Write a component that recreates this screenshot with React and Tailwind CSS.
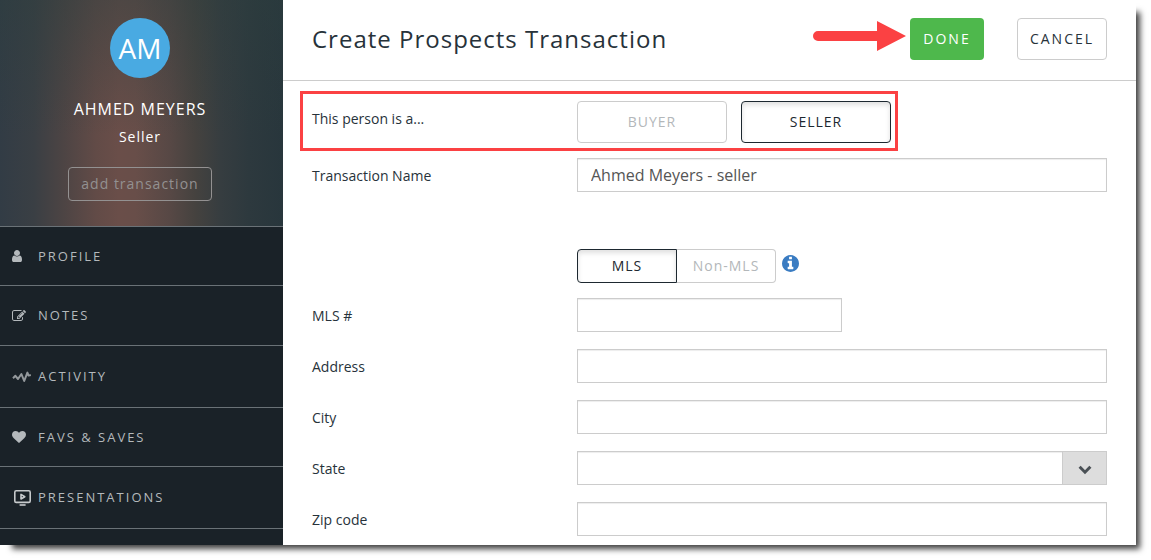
import React, { useState } from 'react';
import clsx from 'clsx';

const UserIcon = () => (
  <svg viewBox="0 128 1280 1536" className="h-3 w-[10px]" fill="currentColor" aria-hidden>
    <path d="M1280 1399q0 109-62.5 187t-150.5 78h-854q-88 0-150.5-78t-62.5-187q0-85 8.5-160.5t31.5-152 58.5-131 94-89 134.5-34.5q131 128 313 128t313-128q76 0 134.5 34.5t94 89 58.5 131 31.5 152 8.5 160.5zm-256-887q0 159-112.5 271.5t-271.5 112.5-271.5-112.5-112.5-271.5 112.5-271.5 271.5-112.5 271.5 112.5 112.5 271.5z" />
  </svg>
);

const NotesIcon = () => (
  <svg viewBox="0 0 1792 1792" className="size-[14px]" fill="currentColor" aria-hidden>
    <path d="M888 1184l116-116-152-152-116 116v56h96v96h56zm440-720q-16-16-33 1l-350 350q-17 17-1 33t33-1l350-350q17-17 1-33zm80 594v190q0 119-84.5 203.5t-203.5 84.5h-832q-119 0-203.5-84.5t-84.5-203.5v-832q0-119 84.5-203.5t203.5-84.5h832q63 0 117 25 15 7 18 23 3 17-9 29l-49 49q-14 14-32 8-23-6-45-6h-832q-66 0-113 47t-47 113v832q0 66 47 113t113 47h832q66 0 113-47t47-113v-126q0-13 9-22l64-64q15-15 35-7t20 29zm-96-738l288 288-672 672h-288v-288zm444 132l-92 92-288-288 92-92q28-28 68-28t68 28l152 152q28 28 28 68t-28 68z" />
  </svg>
);

const ActivityIcon = () => (
  <svg viewBox="0 0 20 12" className="h-3 w-5 text-[#94999c]" fill="none" stroke="currentColor" strokeWidth="2" aria-hidden>
    <path d="M1 7.2 3.4 4.8 6 8 9.4 3 12.2 10 15.4 1.6 16.6 4.6 18.8 4" strokeLinejoin="round" />
  </svg>
);

const HeartIcon = () => (
  <svg viewBox="0 0 1792 1792" className="size-[14px]" fill="currentColor" aria-hidden>
    <path d="M896 1664q-26 0-44-18l-624-602q-10-8-27.5-26t-55.5-65.5-68-97.5-53.5-121-23.5-138q0-220 127-344t351-124q62 0 126.5 21.5t120 58 95.5 68.5 76 68q36-36 76-68t95.5-68.5 120-58 126.5-21.5q224 0 351 124t127 344q0 221-229 450l-623 600q-18 18-44 18z" />
  </svg>
);

const PresentationIcon = () => (
  <svg viewBox="0 0 20 20" className="size-5 text-[#c6cacc]" fill="none" stroke="currentColor" strokeWidth="1.6" aria-hidden>
    <rect x="2.8" y="2.8" width="15.4" height="11.6" rx="1.4" />
    <path d="M9 6.4v4.6l3.8-2.3z" strokeLinejoin="round" />
    <path d="M7.6 17h6" />
  </svg>
);

const InfoIcon = () => (
  <svg viewBox="128 128 1536 1536" className="size-[17px]" fill="currentColor" aria-hidden>
    <path d="M1152 1376v-160q0-14-9-23t-23-9h-96v-512q0-14-9-23t-23-9h-320q-14 0-23 9t-9 23v160q0 14 9 23t23 9h96v320h-96q-14 0-23 9t-9 23v160q0 14 9 23t23 9h448q14 0 23-9t9-23zm-128-896v-160q0-14-9-23t-23-9h-192q-14 0-23 9t-9 23v160q0 14 9 23t23 9h192q14 0 23-9t9-23zm640 416q0 209-103 385.5t-279.5 279.5-385.5 103-385.5-103-279.5-279.5-103-385.5 103-385.5 279.5-279.5 385.5-103 385.5 103 279.5 279.5 103 385.5z" />
  </svg>
);

const navItems = [
  { label: 'PROFILE', icon: UserIcon, height: 'h-[59px]' },
  { label: 'NOTES', icon: NotesIcon, height: 'h-[60px]' },
  { label: 'ACTIVITY', icon: ActivityIcon, height: 'h-[62px]' },
  { label: 'FAVS & SAVES', icon: HeartIcon, height: 'h-[59px]' },
  { label: 'PRESENTATIONS', icon: PresentationIcon, height: 'h-[62px]' },
];

const inputClass =
  'block h-[34px] w-full border border-[#ccc] bg-white px-[13px] text-base text-[#555] shadow-[inset_0_1px_1px_rgba(0,0,0,0.075)] outline-none';

function Sidebar() {
  return (
    <aside className="w-[283px] shrink-0 bg-[#1a2228]">
      <div className="flex h-[226px] flex-col items-center bg-[linear-gradient(180deg,rgba(44,62,62,0.45)_0%,rgba(44,62,62,0)_60%),linear-gradient(90deg,#323c45_0%,#3a3f44_12%,#4c4444_22%,#624b47_34%,#6a4e49_42%,#684e49_48%,#574845_60%,#45423f_69%,#363d40_78%,#2d393e_88%,#28363c_100%)] pt-[18px] pr-[3px] text-white">
        <div className="flex size-[60px] items-center justify-center rounded-full bg-[#49aae2] text-[28px]">AM</div>
        <p className="mt-[19px] text-base leading-6 tracking-[1px]">AHMED MEYERS</p>
        <p className="mt-1 text-sm leading-6 font-medium tracking-[1px]">Seller</p>
        <button
          type="button"
          className="mt-[18px] h-[34px] w-[144px] rounded-[4px] border border-[#939191] text-sm tracking-[1px] text-[#939191]"
        >
          add transaction
        </button>
      </div>
      <nav>
        <ul>
          {navItems.map(({ label, icon: Icon, height }) => (
            <li key={label} className={clsx('border-t border-[#6a7277] last:border-b', height, 'last:h-[63px]')}>
              <a href="#" className="flex h-full items-center pl-3 text-[13px] tracking-[2px] text-[#b4b9bc]">
                <span className="w-[26px] shrink-0">
                  <Icon />
                </span>
                {label}
              </a>
            </li>
          ))}
        </ul>
      </nav>
    </aside>
  );
}

function ToggleButton({ active, className, children, ...props }) {
  return (
    <button
      type="button"
      aria-pressed={active}
      className={clsx(
        'border text-sm',
        active
          ? 'border-[#1d2830] text-[#1d2830] shadow-[inset_0_3px_5px_rgba(0,0,0,0.125)]'
          : 'border-[#ccc] text-[#b3b7ba]',
        className
      )}
      {...props}
    >
      {children}
    </button>
  );
}

function Field({ id, label, children }) {
  return (
    <div className="grid grid-cols-3 items-center">
      <label htmlFor={id} className="pt-[2px]">{label}</label>
      <div className="col-span-2">{children}</div>
    </div>
  );
}

export default function App() {
  const [role, setRole] = useState('seller');
  const [source, setSource] = useState('mls');

  return (
    <div className="bg-white pr-[15px] pb-[15px] font-['Open_Sans',sans-serif] text-sm text-[#27323a]">
      <div className="flex bg-white shadow-[8px_8px_6px_-4px_rgba(0,0,0,0.75)]">
        <Sidebar />

        <main className="min-w-0 flex-1">
          <header className="flex h-[81px] items-center border-b border-[#ccc] px-[29px] pb-[2px]">
            <h1 className="text-2xl tracking-[1px]">Create Prospects Transaction</h1>
            <svg viewBox="0 0 93 30" className="mr-1 mb-[6px] ml-auto h-[30px] w-[93px] shrink-0" fill="#fb4143" aria-hidden>
              <path d="M5 10H64V0L93 15 64 30V20H5A5 5 0 0 1 5 10Z" />
            </svg>
            <button type="button" className="h-[42px] w-[74px] rounded-[4px] bg-[#4eb84c] text-sm tracking-[2px] text-white">
              DONE
            </button>
            <button type="button" className="ml-[33px] h-[42px] w-[90px] rounded-[4px] border border-[#ccc] text-sm tracking-[2px]">
              CANCEL
            </button>
          </header>

          <form className="px-[29px] pt-5 pb-[9px]" onSubmit={(e) => e.preventDefault()}>
            <div className="relative grid grid-cols-3" role="group" aria-labelledby="role-label">
              <span id="role-label" className="pt-2">This person is a...</span>
              <div className="col-span-2 flex gap-[14px]">
                <ToggleButton
                  active={role === 'buyer'}
                  onClick={() => setRole('buyer')}
                  className="h-[42px] w-[150px] rounded-[4px] tracking-[1px]"
                >
                  BUYER
                </ToggleButton>
                <ToggleButton
                  active={role === 'seller'}
                  onClick={() => setRole('seller')}
                  className="h-[42px] w-[150px] rounded-[4px] tracking-[1px]"
                >
                  SELLER
                </ToggleButton>
              </div>
              {/* highlight around the role picker */}
              <div
                className="pointer-events-none absolute -top-[10px] -bottom-2 -left-3 w-[calc(33.333%+333px)] border-3 border-[#fb4143]"
                aria-hidden
              />
            </div>

            <div className="mt-[15px]">
              <Field id="transaction-name" label="Transaction Name">
                <input id="transaction-name" type="text" defaultValue="Ahmed Meyers - seller" className={inputClass} />
              </Field>
            </div>

            <div className="mt-[57px] mb-[15px] grid grid-cols-3" role="group" aria-label="Listing source">
              <div className="col-span-2 col-start-2 flex">
                <ToggleButton
                  active={source === 'mls'}
                  onClick={() => setSource('mls')}
                  className="h-[34px] w-[100px] rounded-l-[4px] tracking-[1px]"
                >
                  MLS
                </ToggleButton>
                <ToggleButton
                  active={source === 'non-mls'}
                  onClick={() => setSource('non-mls')}
                  className="h-[34px] w-[99px] rounded-r-[4px] border-l-0 tracking-[1px]"
                >
                  Non-MLS
                </ToggleButton>
                <button type="button" className="ml-[6px] flex pt-[6px] text-[#3a7cc2]" aria-label="About MLS listings">
                  <InfoIcon />
                </button>
              </div>
            </div>

            <div className="flex flex-col gap-[17px]">
              <Field id="mls-number" label="MLS #">
                <div className="w-1/2">
                  <input id="mls-number" type="text" className={inputClass} />
                </div>
              </Field>
              <Field id="address" label="Address">
                <input id="address" type="text" className={inputClass} />
              </Field>
              <Field id="city" label="City">
                <input id="city" type="text" className={inputClass} />
              </Field>
              <Field id="state" label="State">
                <div className="relative">
                  <select id="state" className={clsx(inputClass, 'appearance-none')} defaultValue="">
                    <option value="" />
                    <option>California</option>
                    <option>Oregon</option>
                    <option>Washington</option>
                  </select>
                  <span className="pointer-events-none absolute inset-y-0 right-0 flex w-[45px] items-center justify-center border border-[#ccc] bg-[#ddd] text-[#4a5055]">
                    <svg viewBox="0 0 14 10" className="mt-1 h-[10px] w-[14px]" fill="none" stroke="currentColor" strokeWidth="3" aria-hidden>
                      <path d="M1.6 1.8 7 7.2 12.4 1.8" />
                    </svg>
                  </span>
                </div>
              </Field>
              <Field id="zip" label="Zip code">
                <input id="zip" type="text" className={inputClass} />
              </Field>
            </div>
          </form>
        </main>
      </div>
    </div>
  );
}
